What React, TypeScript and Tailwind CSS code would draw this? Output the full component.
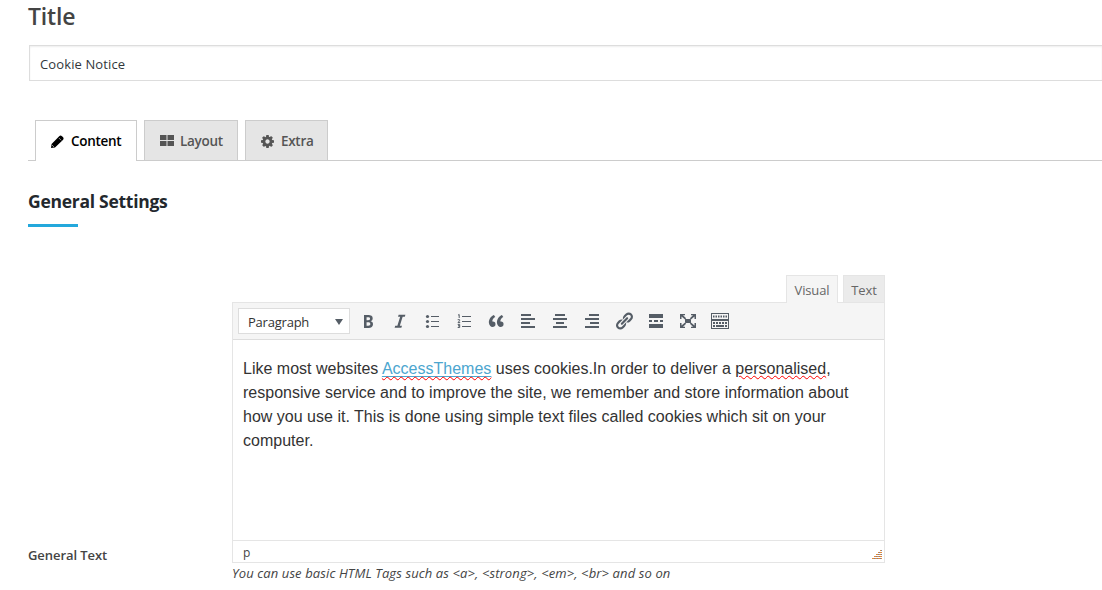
import type { ReactNode } from "react";

function Glyph({ children }: { children: ReactNode }) {
  return (
    <svg viewBox="0 0 20 20" className="h-5 w-5 shrink-0 fill-[#555d66]">
      {children}
    </svg>
  );
}

const cog =
  "M1024 896q0-106-75-181t-181-75-181 75-75 181 75 181 181 75 181-75 75-181zm512-109v222q0 12-8 23t-20 13l-185 28q-19 54-39 91 35 50 107 138 10 12 10 25t-9 23q-27 37-99 108t-94 71q-12 0-26-9l-138-108q-44 23-91 38-16 136-29 186-7 28-36 28h-222q-14 0-24.500-8.500t-11.500-21.500l-28-184q-49-16-90-37l-141 107q-10 9-25 9-14 0-25-11-126-114-165-168-7-10-7-23 0-12 8-23 15-21 51-66.500t54-70.500q-27-50-41-99l-183-27q-13-2-21-12.500t-8-23.500v-222q0-12 8-23t19-13l186-28q14-46 39-92-40-57-107-138-10-12-10-24 0-10 9-23 26-36 98.500-107.500t94.500-71.500q13 0 26 10l138 107q44-23 91-38 16-136 29-186 7-28 36-28h222q14 0 24.500 8.500t11.500 21.500l28 184q49 16 90 37l142-107q9-9 24-9 13 0 25 10 129 119 165 170 7 8 7 22 0 12-8 23-15 21-51 66.500t-54 70.500q26 50 41 98l183 28q13 2 21 12.500t8 23.500z";
const link =
  "M17.74 2.76c1.68 1.69 1.68 4.41 0 6.1l-1.53 1.52c-1.12 1.12-2.7 1.47-4.14 1.09l2.62-2.61.76-.77.76-.76c.84-.84.84-2.2 0-3.04-.84-.85-2.2-.85-3.04 0l-.77.76-3.38 3.38c-.37-1.44-.02-3.02 1.1-4.14l1.52-1.53c1.69-1.68 4.42-1.68 6.1 0zM8.59 13.43l5.34-5.34c.42-.42.42-1.1 0-1.52-.44-.43-1.13-.39-1.53 0l-5.33 5.34c-.42.42-.42 1.1 0 1.52.44.43 1.13.39 1.52 0zm-.76 2.29l4.14-4.15c.38 1.44.03 3.02-1.09 4.14l-1.52 1.53c-1.69 1.68-4.41 1.68-6.1 0-1.68-1.68-1.68-4.42 0-6.1l1.53-1.52c1.12-1.12 2.7-1.47 4.14-1.1l-4.14 4.15c-.85.84-.85 2.2 0 3.05.84.84 2.2.84 3.04 0z";
const bold =
  "M6 4v13h4.54c1.37 0 2.46-.33 3.26-1 .8-.66 1.2-1.58 1.2-2.77 0-.84-.17-1.51-.51-2.01s-.9-.85-1.67-1.03v-.09c.57-.1 1.02-.4 1.36-.9s.51-1.13.51-1.91c0-1.14-.39-1.98-1.17-2.5C12.75 4.26 11.5 4 9.78 4H6zm2.57 5.15V6.26h1.36c.73 0 1.27.11 1.61.32.34.22.51.58.51 1.07 0 .54-.16.92-.47 1.15s-.82.35-1.51.35h-1.5zm0 2.19h1.6c1.44 0 2.16.53 2.16 1.61 0 .6-.17 1.05-.51 1.34s-.86.43-1.57.43H8.57v-3.38z";
const quote =
  "M9.49 13.22c0-.74-.2-1.38-.61-1.9-.62-.78-1.83-.88-2.53-.72-.29-1.65 1.11-3.75 2.92-4.65L7.88 4c-2.73 1.3-5.42 4.28-4.96 8.05C3.21 14.43 4.59 16 6.54 16c.85 0 1.56-.25 2.12-.75s.83-1.18.83-2.03zm8.05 0c0-.74-.2-1.38-.61-1.9-.63-.78-1.83-.88-2.53-.72-.29-1.65 1.11-3.75 2.92-4.65L15.93 4c-2.73 1.3-5.41 4.28-4.95 8.05.29 2.38 1.66 3.95 3.61 3.95.85 0 1.56-.25 2.12-.75s.83-1.18.83-2.03z";

function Toolbar() {
  return (
    <div className="flex h-[37px] items-start border-b border-[#dddddd] bg-[#f5f5f5] pt-[5px] pl-[5px]">
      <div className="flex h-[26px] w-[112px] items-center justify-between border border-[#dddddd] bg-white pr-[6px] pl-[9px] text-[13px] text-[#333]">
        <span className="pt-[3px] tracking-[-0.22px]">Paragraph</span>
        <svg viewBox="0 0 8 6" className="mt-px h-[6px] w-2 fill-[#555d66]">
          <path d="M0 0h8L4 6z" />
        </svg>
      </div>
      <div className="flex gap-3 pt-[3px] pl-2">
        <Glyph><path d={bold} /></Glyph>
        <Glyph><path d="M14.78 6h-2.13l-2.8 9h2.12l-.62 2H4.6l.62-2h2.14l2.8-9H8.03l.62-2h6.75z" transform="translate(0 -.3)" /></Glyph>
        <Glyph>
          <circle cx="5.500" cy="5.500" r="1.600" /><circle cx="5.500" cy="10.500" r="1.600" /><circle cx="5.500" cy="15.500" r="1.600" />
          <path d="M9 5h8v1H9zM9 10h8v1H9zM9 15h8v1H9z" />
        </Glyph>
        <Glyph>
          <path d="M8 5h9v1H8zM8 10h9v1H8zM8 15h9v1H8z" />
          <path d="M4 4.200L5.200 3.500v3.500M3.700 8.700h1.900v1L4 11.600h2.200M3.700 13.400h2v1.400H4.200h1.500v1.700H3.700" fill="none" stroke="#555d66" strokeWidth="1" />
        </Glyph>
        <Glyph><path d={quote} /></Glyph>
        <Glyph><path d="M3 3h10v2H3zM3 7h14v2H3zM3 11h9v2H3zM3 15h14v2H3z" /></Glyph>
        <Glyph><path d="M5 3h10v2H5zM3 7h14v2H3zM6 11h8v2H6zM3 15h14v2H3z" /></Glyph>
        <Glyph><path d="M7 3h10v2H7zM3 7h14v2H3zM8 11h9v2H8zM3 15h14v2H3z" /></Glyph>
        <Glyph><path d={link} /></Glyph>
        <Glyph><path d="M3 3h14v4H3zM3 9h3v2H3zM8 9h4v2H8zM14 9h3v2h-3zM3 13h14v4H3z" /></Glyph>
        <Glyph>
          <path d="M7 8h6v4H7zM2 3h5v1.300H5L8.200 7.300 7 8.500 3.500 5.500V8H2zM18 3h-5v1.300h2L11.800 7.300l1.200 1.200 3.500-3V8H18zM2 17h5v-1.300H5l3.200-3L7 11.500l-3.500 3V12H2zM18 17h-5v-1.300h2l-3.200-3 1.200-1.200 3.500 3V12H18z" />
        </Glyph>
        <Glyph>
          <path fillRule="evenodd" d="M1 2h18v7H1zM2 3v5h16V3zM1 9h18v9H1zM2 10v7h16v-7z" />
          <path d="M3 4.500h1.500v2H3zM5.500 4.500H7v2H5.500zM8 4.500h1.500v2H8zM10.500 4.500H12v2h-1.500zM13 4.500h1.500v2H13zM15.500 4.500H17v2h-1.500zM3 11h2v2H3zM6 11h2v2H6zM9 11h2v2H9zM12 11h2v2h-2zM15 11h2v2h-2zM3 14h2v2H3zM6 14h8v2H6zM15 14h2v2h-2z" />
        </Glyph>
      </div>
    </div>
  );
}

function Misspelt({ children, href }: { children: string; href?: boolean }) {
  return (
    <span className={href ? "text-[#4ca6cf] underline decoration-1 underline-offset-2" : ""}>
      <span className="underline decoration-[#ff0000] decoration-wavy decoration-1">{children}</span>
    </span>
  );
}

export default function App() {
  return (
    <div className="h-[590px] overflow-hidden bg-white pl-7 font-['Open_Sans',sans-serif] text-[#444]">
      <h1 className="h-[45px] text-[23px] leading-8 font-semibold tracking-[-0.15px]">Title</h1>
      <div className="ml-px flex h-9 items-center border border-r-0 border-[#dddddd] pt-[3px] pl-[10px] text-[13px] tracking-[0.12px] text-[#32373c] shadow-[inset_0_1px_2px_rgba(0,0,0,0.07)]">
        Cookie Notice
      </div>

      <div className="mt-[39px] flex h-[41px] gap-[7px] border-b border-[#cccccc] pl-[7px] text-[13.500px] font-semibold tracking-[-0.3px] text-[#555]">
        <div className="flex h-[41px] w-[102px] items-center border border-b-0 border-[#cccccc] bg-white pl-[15px] text-black">
          <svg viewBox="0 0 13 13" className="mr-[7px] h-[13px] w-[13px] fill-black">
            <path d="M0 13l.6-4L8.200 1.200q1.400-1.400 2.800 0l.9.900q1.400 1.400 0 2.800L4 12.400z" />
            <path d="M7.900 3l2.300 2.300M1 10l2 2" stroke="#fff" strokeWidth=".55" />
          </svg>
          <span>Content</span>
        </div>
        <div className="flex h-[40px] w-[94px] items-center border border-b-0 border-[#cccccc] bg-[#e5e5e5] pt-px pl-[15px]">
          <svg viewBox="0 0 14 11" className="mr-[6px] mb-px h-[11px] w-[14px] fill-[#555]">
            <path d="M0 0h6.500v5H0zM7.500 0H14v5H7.500zM0 6h6.500v5H0zM7.500 6H14v5H7.500z" />
          </svg>
          <span>Layout</span>
        </div>
        <div className="flex h-[40px] w-[83px] items-center border border-b-0 border-[#cccccc] bg-[#e5e5e5] pt-px pl-[15px]">
          <svg viewBox="0 128 1536 1536" className="mr-[7px] h-[13px] w-[13px] fill-[#555]">
            <path d={cog} />
          </svg>
          <span>Extra</span>
        </div>
      </div>

      <h2 className="mt-[27px] h-[36px] text-[17.500px] leading-[26px] font-bold tracking-[-0.27px] text-[#23282d]">General Settings</h2>
      <div className="h-[3px] w-[50px] bg-[#23a8dc]" />

      <div className="mt-[48px] flex">
        <div className="w-[204px] pt-[270px] text-[13px] leading-5 font-semibold tracking-[-0.07px]">General Text</div>
        <div className="w-[653px]">
          <div className="relative flex h-7 justify-end gap-[5px] text-[13px] text-[#666]">
            <div className="flex h-7 w-[52px] justify-center border border-b-0 border-[#e5e5e5] bg-[#f5f5f5] pt-[4px] leading-5 tracking-[-0.15px]">Visual</div>
            <div className="flex h-[27px] w-[42px] justify-center border border-b-0 border-[#e5e5e5] bg-[#ebebeb] pt-[4px] leading-5 tracking-[-0.15px]">Text</div>
          </div>
          <div className="-mt-px h-[261px] border border-[#e5e5e5]">
            <Toolbar />
            <div className="h-[201px] border-b border-[#e5e5e5] px-[10px] pt-[17px] font-['Liberation_Sans',Arial,sans-serif] text-[16px] leading-6 tracking-[0.008px] whitespace-nowrap text-[#333]">
              Like most websites <Misspelt href>AccessThemes</Misspelt> uses cookies.In order to deliver a <Misspelt>personalised</Misspelt>,<br />
              responsive service and to improve the site, we remember and store information about<br />
              how you use it. This is done using simple text files called cookies which sit on your<br />
              computer.
            </div>
            <div className="flex h-[21px] items-center justify-between pr-[2px] pl-[10px] text-[12px]">
              <span className="pt-[2px]">p</span>
              <svg viewBox="0 0 10 10" className="mt-[6px] h-[10px] w-[10px]">
                <path d="M8 0h2v1H8zM6 2h4v1H6zM4 4h6v1H4zM2 6h8v1H2zM0 8h10v1H0z" fill="#e08a3c" />
                <path d="M9 0h1v1H9zM7 2h1v1H7zM9 4h1v1H9zM6 4h1v1H6zM4 6h1v1H4zM7 6h1v1H7zM2 8h1v1H2zM5 8h1v1H5zM8 8h1v1H8z" fill="#7c7f96" />
              </svg>
            </div>
          </div>
          <p className="text-[13px] leading-5 tracking-[0.115px] whitespace-nowrap italic">
            You can use basic HTML Tags such as &lt;a&gt;, &lt;strong&gt;, &lt;em&gt;, &lt;br&gt; and so on
          </p>
        </div>
      </div>
    </div>
  );
}
